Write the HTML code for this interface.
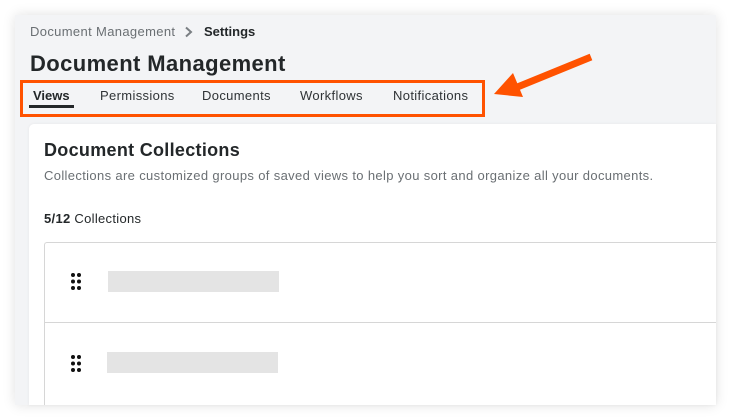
<!DOCTYPE html>
<html><head><style>
*{margin:0;padding:0;box-sizing:border-box}
body{width:731px;height:419px;background:#fff;position:relative;overflow:hidden;font-family:"Liberation Sans",Arial,sans-serif}
.panel{position:absolute;left:15px;top:15px;width:701px;height:390px;background:#f3f4f6;box-shadow:0 0 12px rgba(0,0,0,.12)}
.abs{position:absolute;white-space:nowrap}
.card{position:absolute;left:29px;top:124px;width:687px;height:281px;background:#fff;border-radius:5px 0 0 0;box-shadow:0 0 3px rgba(0,0,0,.06)}
.list{position:absolute;left:44px;top:242px;width:672px;height:163px;border:1px solid #d6d6d6;border-right:none;border-bottom:none;border-radius:3px 0 0 0}
.sep{position:absolute;left:44px;top:322px;width:672px;height:1px;background:#d6d6d6}
.bar{position:absolute;background:#e4e4e4;width:171px;height:21px}
.tab{position:absolute;top:88px;font-size:13px;color:#2f3336;letter-spacing:0.35px}
</style></head><body>
<div class="panel"></div>
<div class="abs" style="left:30px;top:24px;font-size:13px;color:#6a6f73;letter-spacing:0.35px">Document Management</div>
<svg class="abs" style="left:184px;top:26px" width="10" height="12"><path d="M2 1.5L7 6L2 10.5" stroke="#7a7f83" stroke-width="2" fill="none"/></svg>
<div class="abs" style="left:204px;top:24px;font-size:13px;font-weight:bold;color:#232729">Settings</div>
<div class="abs" style="left:30px;top:51px;font-size:22px;font-weight:bold;color:#232729;letter-spacing:0.4px">Document Management</div>
<div class="tab" style="left:33px;font-weight:bold;color:#232729;letter-spacing:0">Views</div>
<div class="abs" style="left:29px;top:105px;width:45px;height:3px;background:#232729"></div>
<div class="tab" style="left:100px">Permissions</div>
<div class="tab" style="left:202px">Documents</div>
<div class="tab" style="left:300px">Workflows</div>
<div class="tab" style="left:393px">Notifications</div>
<div class="abs" style="left:20px;top:80px;width:465px;height:37px;border:3px solid #ff5200"></div>
<svg class="abs" style="left:0;top:0" width="731" height="419"><line x1="591" y1="57" x2="515" y2="88" stroke="#ff5200" stroke-width="7"/><polygon points="494,94 513,73 523,97" fill="#ff5200"/></svg>
<div class="card"></div>
<div class="abs" style="left:44px;top:140px;font-size:18px;font-weight:bold;color:#232729;letter-spacing:0.3px">Document Collections</div>
<div class="abs" style="left:44px;top:168px;font-size:13px;color:#6a6f73;letter-spacing:0.35px">Collections are customized groups of saved views to help you sort and organize all your documents.</div>
<div class="abs" style="left:44px;top:211px;font-size:13px;color:#232729;letter-spacing:0.3px"><b>5/12</b> Collections</div>
<div class="list"></div>
<div class="sep"></div>
<svg class="abs" style="left:70px;top:272px" width="12" height="20"><g fill="#111"><circle cx="3" cy="3" r="2"/><circle cx="9" cy="3" r="2"/><circle cx="3" cy="9.5" r="2"/><circle cx="9" cy="9.5" r="2"/><circle cx="3" cy="16" r="2"/><circle cx="9" cy="16" r="2"/></g></svg>
<div class="bar" style="left:108px;top:271px"></div>
<svg class="abs" style="left:70px;top:354px" width="12" height="20"><g fill="#111"><circle cx="3" cy="3" r="2"/><circle cx="9" cy="3" r="2"/><circle cx="3" cy="9.5" r="2"/><circle cx="9" cy="9.5" r="2"/><circle cx="3" cy="16" r="2"/><circle cx="9" cy="16" r="2"/></g></svg>
<div class="bar" style="left:107px;top:352px"></div>
</body></html>
